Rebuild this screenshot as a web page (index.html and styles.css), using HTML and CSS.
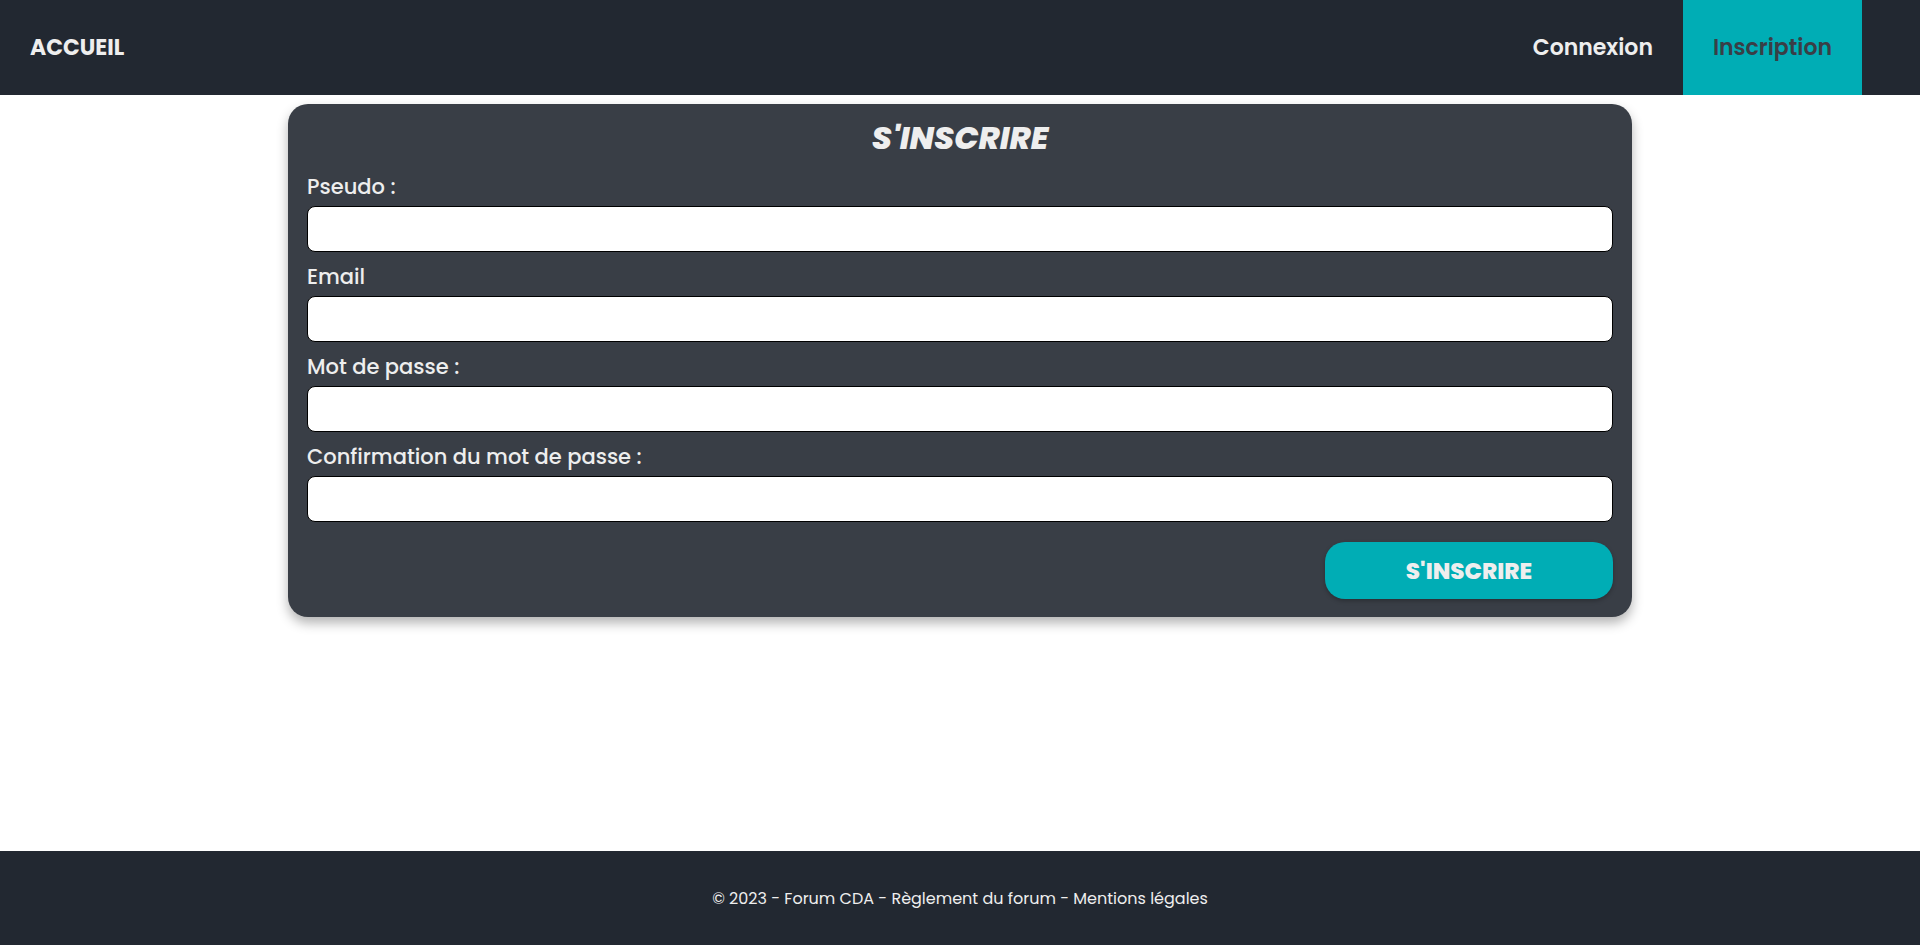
FILE: index.html
```html
<!DOCTYPE html>
<html lang="fr">
<head>
<meta charset="utf-8">
<title>Inscription - Forum CDA</title>
<link rel="stylesheet" href="styles.css">
</head>
<body>
<header class="topbar">
  <a class="brand" href="#">ACCUEIL</a>
  <nav class="nav">
    <a class="nav-link" href="#">Connexion</a>
    <a class="nav-link active" href="#">Inscription</a>
  </nav>
</header>
<main class="main">
  <form class="card">
    <h1 class="card-title">S'INSCRIRE</h1>
    <div class="field">
      <label class="label" for="pseudo">Pseudo :</label>
      <input class="input" id="pseudo" type="text">
    </div>
    <div class="field">
      <label class="label" for="email">Email</label>
      <input class="input" id="email" type="email">
    </div>
    <div class="field">
      <label class="label" for="mdp">Mot de passe :</label>
      <input class="input" id="mdp" type="password">
    </div>
    <div class="field">
      <label class="label" for="mdp2">Confirmation du mot de passe :</label>
      <input class="input" id="mdp2" type="password">
    </div>
    <div class="actions">
      <button class="submit" type="button">S'INSCRIRE</button>
    </div>
  </form>
</main>
<footer class="footer">
  <p class="footer-text">© 2023 - Forum CDA - Règlement du forum - Mentions légales</p>
</footer>
</body>
</html>
```
FILE: styles.css
```css
* { box-sizing: border-box; }
html, body { margin: 0; padding: 0; }
body {
  font-family: "Poppins", "Open Sans", "Noto Sans", sans-serif;
  color: #eeeeee;
  background: #ffffff;
  min-height: 100vh;
  display: flex;
  flex-direction: column;
}
.topbar {
  height: 95px;
  background: #222831;
  display: flex;
  align-items: center;
  justify-content: space-between;
  padding: 0 58px 0 30px;
}
.brand {
  color: #eeeeee;
  text-decoration: none;
  font-weight: 700;
  font-size: 22px;
}
.nav { display: flex; height: 100%; }
.nav-link {
  display: flex;
  align-items: center;
  padding: 0 30px;
  height: 100%;
  color: #eeeeee;
  text-decoration: none;
  font-weight: 600;
  font-size: 22px;
}
.nav-link.active {
  background: #00adb5;
  color: #393e46;
}
.main {
  flex: 1;
  display: flex;
  justify-content: center;
  align-items: flex-start;
  padding-top: 9px;
}
.card {
  width: 1344px;
  background: #393e46;
  border-radius: 20px;
  box-shadow: 0 6px 12px rgba(0, 0, 0, 0.3);
  padding: 12px 19px 18px;
  display: flex;
  flex-direction: column;
}
.card-title {
  margin: 0 0 12px;
  text-align: center;
  font-size: 32px;
  font-style: italic;
  font-weight: 800;
  line-height: 44px;
  color: #eeeeee;
}
.field {
  display: flex;
  flex-direction: column;
  margin-bottom: 10px;
}
.label {
  font-size: 21px;
  font-weight: 500;
  line-height: 30px;
  margin-bottom: 4px;
}
.input {
  height: 46px;
  border: 1px solid #000000;
  border-radius: 8px;
  background: #ffffff;
  font: inherit;
  padding: 0 10px;
}
.actions {
  display: flex;
  justify-content: flex-end;
  margin-top: 10px;
}
.submit {
  width: 288px;
  height: 57px;
  border: none;
  border-radius: 20px;
  background: #00adb5;
  color: #eeeeee;
  font-family: inherit;
  font-size: 23px;
  font-weight: 800;
  box-shadow: 0 2px 4px rgba(0, 0, 0, 0.25);
}
.footer {
  height: 94px;
  background: #222831;
  display: flex;
  align-items: center;
  justify-content: center;
}
.footer-text {
  margin: 0;
  font-size: 16px;
  color: #eeeeee;
}
```
